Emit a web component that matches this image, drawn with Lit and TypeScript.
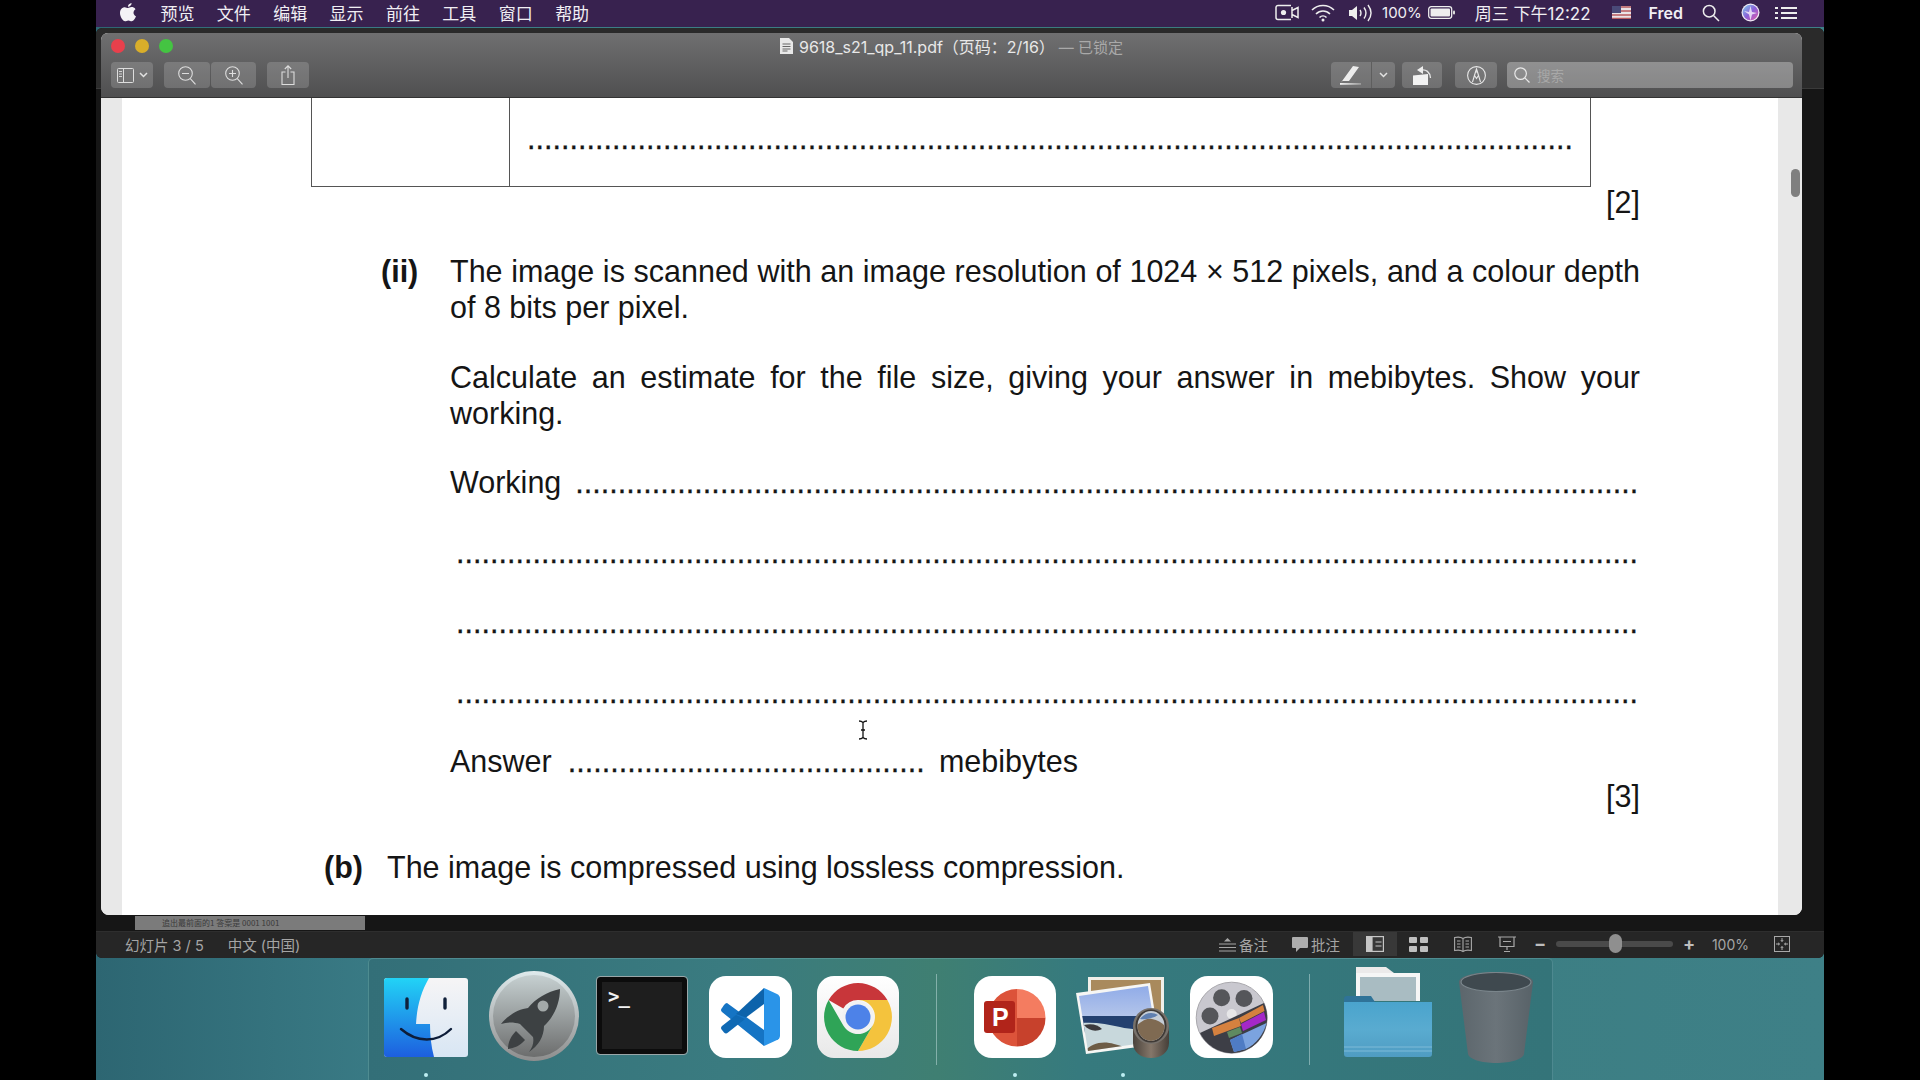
import { LitElement, html, css, svg } from 'lit'
import { customElement } from 'lit/decorators.js'

const dots = (n: number) => '.'.repeat(n)

// menu bar icons
const icRecord = html`<svg width="24" height="17" viewBox="0 0 24 17" fill="none" stroke="#eee" stroke-width="1.5"><path d="M16 1.5H3a2 2 0 0 0-2 2v10a2 2 0 0 0 2 2h13"/><path d="M17 3v11M17 6.5l6-3v10l-6-3"/><circle cx="8.5" cy="8.5" r="2.6" fill="#eee" stroke="none"/></svg>`
const icWifi = html`<svg width="24" height="18" viewBox="0 0 24 18" fill="none" stroke="#eee" stroke-width="1.6"><path d="M1 6c6-6 16-6 22 0M5 10c4-4 10-4 14 0M8.5 13.5c2-2 5-2 7 0"/><circle cx="12" cy="16" r="1.5" fill="#eee" stroke="none"/></svg>`
const icVolume = html`<svg width="24" height="18" viewBox="0 0 24 18" fill="none" stroke="#eee" stroke-width="1.4"><path d="M1 6h3l5-4v14l-5-4H1z" fill="#eee" stroke="none"/><path d="M12 6c1.300 2 1.300 4 0 6M16 3.500c2.500 3.500 2.500 7.500 0 11M20 1c3.800 5 3.800 11 0 16"/></svg>`
const icBattery = html`<svg width="27" height="13" viewBox="0 0 27 13"><rect x=".7" y=".7" width="23" height="11.600" rx="2.500" fill="none" stroke="#eee" stroke-width="1.300"/><rect x="2.500" y="2.500" width="19.500" height="8" rx="1" fill="#eee"/><rect x="25" y="4.500" width="2" height="4" rx="1" fill="#ddd"/></svg>`
const icFlag = html`<svg width="19" height="13" viewBox="0 0 19 13"><rect width="19" height="13" fill="#e9e3e6"/><path d="M0 1h19M0 5h19M0 9h19M0 12.500h19" stroke="#b85a5e" stroke-width="1.300"/><rect width="9" height="7" fill="#4a4a78"/></svg>`
const icSearch = html`<svg width="18" height="18" viewBox="0 0 18 18" fill="none" stroke="#eee" stroke-width="1.500"><circle cx="7.200" cy="7.200" r="5.800"/><path d="M11.500 11.500 17 17"/></svg>`
const icSiri = html`<svg width="19" height="19" viewBox="0 0 19 19"><defs><linearGradient id="siri" x1="0" y1="0" x2="1" y2="1"><stop offset="0" stop-color="#7fd0ee"/><stop offset=".5" stop-color="#8a5fd8"/><stop offset="1" stop-color="#e05aa8"/></linearGradient></defs><circle cx="9.500" cy="9.500" r="9" fill="#f0ecf5"/><circle cx="9.500" cy="9.500" r="7.800" fill="url(#siri)"/><path d="M3 8l5 1 1.500-6 1.500 6 5 1-5 1.500-1.500 6-1.500-6z" fill="#f2eafa" opacity=".85"/></svg>`
const icList = html`<svg width="22" height="14" viewBox="0 0 22 14" fill="none" stroke="#eee" stroke-width="2"><path d="M0 2h3M6 2h16M0 7h3M6 7h16M0 12h3M6 12h16"/></svg>`
const icApple = html`<svg width="16" height="19" viewBox="0 0 16 19" fill="#f4f2f6"><path d="M11.600 0c.1 1.900-1.700 3.900-3.700 3.800C7.700 2 9.700.2 11.600 0zM8 5c1 0 2-.9 3.600-.9 1.100 0 2.900.5 3.900 2.100-2.900 1.800-2.500 5.700.5 7-.8 2.100-2.500 5-4.300 5-1.300 0-1.700-.8-3.300-.8s-2.100.8-3.300.8C2.800 18.200 0 13.700 0 10c0-3.700 2.500-5.800 4.700-5.800C6.100 4.200 7.200 5 8 5z"/></svg>`

// toolbar icons
const tbSidebar = html`<svg width="17" height="15" viewBox="0 0 17 15" fill="none" stroke="#ddd" stroke-width="1"><rect x=".5" y=".5" width="16" height="14" rx="1"/><path d="M6.500 .5v14"/><path d="M2 3.500h3M2 6h3M2 8.500h3" stroke-width=".9"/></svg>`
const tbChevron = html`<svg width="9" height="6" viewBox="0 0 9 6" fill="none" stroke="#e2e2e2" stroke-width="1.500"><path d="M1 1l3.500 3.500L8 1"/></svg>`
const tbZoom = (plus: boolean) => html`<svg width="18" height="19" viewBox="0 0 18 19" fill="none" stroke="#ddd" stroke-width="1.100"><circle cx="7.500" cy="7.500" r="6.800"/><path d="M12.300 12.600 17.500 18.300M4 7.500h7"/>${plus ? svg`<path d="M7.500 4v7"/>` : ''}</svg>`
const tbShare = html`<svg width="14" height="20" viewBox="0 0 14 20" fill="none" stroke="#ddd" stroke-width="1.100"><path d="M4.500 7H1v12.500h12V7H9.500M7 13V1M3.800 4 7 .8 10.200 4"/></svg>`
const tbPen = html`<svg width="22" height="19" viewBox="0 0 22 19"><defs><linearGradient id="pn" x1="0" y1="0" x2="1" y2="0"><stop offset="0" stop-color="#f2f2f2"/><stop offset="1" stop-color="#9a9a9a"/></linearGradient></defs><path d="M13 0l6 1-10 14H2.500L1 16.500z" fill="#ececec"/><rect x="0" y="17" width="21" height="1.800" fill="url(#pn)"/></svg>`
const tbRotate = html`<svg width="19" height="19" viewBox="0 0 19 19"><path d="M0 9.500 15 8v11H0z" fill="#f2f2f2"/><path d="M8 4C13 3 17 6 17.500 12" fill="none" stroke="#e6e6e6" stroke-width="1.300"/><path d="M10 0v8L4 4z" fill="#eee"/></svg>`
const tbMarkup = html`<svg width="19" height="19" viewBox="0 0 19 19" fill="none" stroke="#e8e8e8" stroke-width="1.100"><circle cx="9.500" cy="9.500" r="8.900"/><path d="M5.500 16 8.500 6l1-3 1 3 3 10M8.500 6h2M7.500 9.500l2 3 2-3"/></svg>`
const tbFind = html`<svg width="16" height="16" viewBox="0 0 16 16" fill="none" stroke="#e8e8e8" stroke-width="1.200"><circle cx="6.600" cy="6.600" r="5.800"/><path d="M10.800 10.800 15.500 15.500"/></svg>`
const icDoc = html`<svg width="13" height="16" viewBox="0 0 13 16"><path d="M0 0h9l4 4v12H0z" fill="#e8e8e8"/><path d="M2.500 6h8M2.500 8.500h8M2.500 11h8M2.500 13h5" stroke="#666" stroke-width="1"/></svg>`

// status bar icons
const stNotes = html`<svg width="17" height="15" viewBox="0 0 17 15" fill="none" stroke="#a5a5a5" stroke-width="1.200"><path d="M0 7h17M0 10.500h17M0 14h17"/><path d="M5 4.500 8.500 1 12 4.500z" fill="#a5a5a5" stroke="none"/></svg>`
const stComment = html`<svg width="16" height="15" viewBox="0 0 16 15"><path d="M1 0h14a1 1 0 0 1 1 1v9a1 1 0 0 1-1 1H8l-4 4v-4H1a1 1 0 0 1-1-1V1a1 1 0 0 1 1-1z" fill="#adadad"/></svg>`
const stNormal = html`<svg width="18" height="16" viewBox="0 0 18 16"><rect x=".6" y=".6" width="16.800" height="14.800" fill="none" stroke="#c6c6c6" stroke-width="1.200"/><rect x=".6" y=".6" width="6" height="14.800" fill="#c6c6c6"/><path d="M9.500 6h6M9.500 10h6" stroke="#c6c6c6" stroke-width="1.200"/></svg>`
const stGrid = html`<svg width="19" height="15" viewBox="0 0 19 15" fill="#c0c0c0"><rect width="8" height="6" rx="1"/><rect x="11" width="8" height="6" rx="1"/><rect y="9" width="8" height="6" rx="1"/><rect x="11" y="9" width="8" height="6" rx="1"/></svg>`
const stRead = html`<svg width="18" height="17" viewBox="0 0 18 17" fill="none" stroke="#a8a8a8" stroke-width="1.100"><path d="M9 2.500C7 1 3 1 .6 1.500v13c2.400-.5 6.400-.5 8.400 1 2-1.500 6-1.500 8.400-1v-13C15 1 11 1 9 2.500zM9 2.500v13M3 5h3.500M3 8h3.500M3 11h3.500M11.500 5H15M11.500 8H15M11.500 11H15"/></svg>`
const stShow = html`<svg width="18" height="17" viewBox="0 0 18 17" fill="none" stroke="#a8a8a8" stroke-width="1.200"><path d="M0 1h18M2 1v9.500h14V1M9 10.500V14M6 15.500h6M5 5.500h8" /></svg>`
const stFit = html`<svg width="16" height="16" viewBox="0 0 16 16" fill="none" stroke="#a8a8a8" stroke-width="1"><rect x=".5" y=".5" width="15" height="15"/><path d="M8 2v3.500M6.800 4 8 5.500 9.200 4M8 14v-3.500M6.800 12 8 10.500 9.200 12M2 8h3.500M4 6.800 5.500 8 4 9.200M14 8h-3.500M12 6.800 10.500 8 12 9.200"/></svg>`

// dock icons
const finder = html`<svg width="84" height="79" viewBox="0 0 84 79"><defs>
  <linearGradient id="fl" x1="0" y1="0" x2="0" y2="1"><stop offset="0" stop-color="#22d3f6"/><stop offset="1" stop-color="#1d5fdf"/></linearGradient>
  <linearGradient id="fr" x1="0" y1="0" x2="0" y2="1"><stop offset="0" stop-color="#f6f5f6"/><stop offset="1" stop-color="#d8e6f4"/></linearGradient></defs>
  <rect width="84" height="79" rx="3" fill="url(#fr)"/>
  <path d="M3 0h42c-8 14-12 28-13 46h14c0 11 1 22 4 33H3a3 3 0 0 1-3-3V3a3 3 0 0 1 3-3z" fill="url(#fl)"/>
  <path d="M23 21v9M61 21v9" stroke="#10203a" stroke-width="3.400" stroke-linecap="round"/>
  <path d="M17 51c16 14 36 14 50 0" fill="none" stroke="#0d1c38" stroke-width="2.400" stroke-linecap="round"/></svg>`
const rocket = html`<svg width="90" height="90" viewBox="0 0 90 90"><defs>
  <linearGradient id="rr" x1="0" y1="0" x2="0" y2="1"><stop offset="0" stop-color="#dfeaec"/><stop offset="1" stop-color="#8d8d8d"/></linearGradient>
  <linearGradient id="ri" x1="0" y1="0" x2="0" y2="1"><stop offset="0" stop-color="#c6d0d1"/><stop offset="1" stop-color="#6c6d6d"/></linearGradient></defs>
  <circle cx="45" cy="45" r="45" fill="url(#rr)"/><circle cx="45" cy="45" r="41" fill="url(#ri)"/>
  <path d="M71 18C58 21 47 27 39 37 30 38 19 44 12 53c6-2 13-2 19 0l13 13c1 5 0 10-4 15 9-6 15-15 15-26 10-9 16-23 16-37z" fill="#3d4143"/>
  <path d="M27 60c-5 5-8 11-8 18 6-1 12-3 17-9-3-3-6-6-9-9z" fill="#3d4143"/>
  <circle cx="54" cy="35" r="5.500" fill="#a3a9a9"/></svg>`
const vscode = html`<svg width="83" height="82" viewBox="0 0 83 82"><rect width="83" height="82" rx="17" fill="#fff"/>
  <path d="M55 12l13 6q3 1.500 3 4.500v37q0 3-3 4.500l-13 6z" fill="#2a94e8"/>
  <path d="M18 27 55 54v16L13 36q-2-2 0-4l2-3q1.500-2 3-2z" fill="#1574c4"/>
  <path d="M55 12 27 38l10 3.500L55 28z" fill="#0d63ab"/>
  <path d="M27 39 13 50q-2 2 0 4l2 2.500q2 2 4 0L36 43z" fill="#0f69b4"/></svg>`
const chrome = html`<svg width="82" height="82" viewBox="0 0 82 82"><defs><linearGradient id="cw" x1="0" y1="0" x2="0" y2="1"><stop offset="0" stop-color="#fff"/><stop offset="1" stop-color="#e8e8e8"/></linearGradient></defs><rect width="82" height="82" rx="17" fill="url(#cw)"/>
  <path d="M11.600 24A34 34 0 0 1 70.400 24H41A17 17 0 0 0 26.300 32.500z" fill="#c8363a"/>
  <path d="M70.400 24A34 34 0 0 1 41 75L55.700 49.500A17 17 0 0 0 41 24z" fill="#f4c33d"/>
  <path d="M41 75A34 34 0 0 1 11.600 24L26.300 49.500A17 17 0 0 0 55.700 49.500z" fill="#2fa457"/>
  <circle cx="41" cy="41" r="16" fill="#f2f2f2"/><circle cx="41" cy="41" r="12.500" fill="#4d82e8"/></svg>`
const ppt = html`<svg width="82" height="82" viewBox="0 0 82 82"><rect width="82" height="82" rx="18" fill="#fff"/>
  <path d="M43 42V13a28.500 28.500 0 0 1 28.500 29z" fill="#f47c60"/>
  <path d="M43 42h28.500A28.500 28.500 0 0 1 43 70.500z" fill="#c7412c"/>
  <path d="M43 13v57.500A28.500 28.500 0 0 1 43 13z" fill="#dc533a"/>
  <rect x="10" y="25" width="31" height="32" rx="3" fill="#b1241a"/>
  <text x="18" y="50" class="ppt-p">P</text></svg>`
const preview = html`<svg width="94" height="83" viewBox="0 0 94 83"><defs>
  <linearGradient id="sk" x1="0" y1="0" x2="0" y2="1"><stop offset="0" stop-color="#8eaae8"/><stop offset="1" stop-color="#b5c6ea"/></linearGradient>
  <linearGradient id="pl" x1="0" y1="0" x2="1" y2="0"><stop offset="0" stop-color="#4a433c"/><stop offset=".5" stop-color="#85776a"/><stop offset="1" stop-color="#463f39"/></linearGradient>
  <clipPath id="ph"><polygon points="3,20 72,10 81,65 12,75"/></clipPath>
  <clipPath id="gl"><ellipse cx="75" cy="50" rx="13.500" ry="15"/></clipPath></defs>
  <rect x="12" y="1" width="76" height="62" fill="#f1efe9"/><rect x="15" y="4" width="70" height="54" fill="#a98a5d"/>
  <polygon points="0,17 74,7 84,68 10,78" fill="#f6f6f4"/>
  <g clip-path="url(#ph)">
    <rect x="0" y="8" width="85" height="34" fill="url(#sk)"/>
    <rect x="0" y="40" width="85" height="17" fill="#23406f"/>
    <path d="M0 48c14-3 30 0 44 3 12 3 24 2 40 6v20H0z" fill="#c8d8dc"/>
    <path d="M8 49c8-2 14 0 18 4-6 3-13 2-18-4z" fill="#3c3a3c"/>
    <path d="M8 76c6-8 18-12 30-8 8 2 14 4 20 9z" fill="#6d5c46"/>
  </g>
  <path d="M57 50h36v17c0 9-8 15-18 15s-18-6-18-15z" fill="url(#pl)"/>
  <ellipse cx="75" cy="50" rx="18" ry="18" fill="#77716b"/>
  <ellipse cx="75" cy="50" rx="15.500" ry="16.500" fill="#3f3a36"/>
  <ellipse cx="75" cy="50" rx="13.500" ry="15" fill="#c4ccd6"/>
  <g clip-path="url(#gl)"><path d="M60 50c6-5 10-8 16-7 6 1 10 4 14 8v16H60z" fill="#7f6a52"/><path d="M64 43c4-6 12-8 18-4-4 3-12 5-18 4z" fill="#5f7fb0"/></g></svg>`
const screenflow = html`<svg width="83" height="82" viewBox="0 0 83 82"><rect width="83" height="82" rx="18" fill="#fff"/>
  <circle cx="41.700" cy="41.700" r="35.500" fill="#c9c8cf"/><circle cx="41.700" cy="41.700" r="35.500" fill="none" stroke="#a9a8ad" stroke-width="1"/>
  <circle cx="31.600" cy="21.700" r="8.500" fill="#55565a"/><circle cx="54" cy="22.600" r="8.500" fill="#55565a"/><circle cx="20" cy="40" r="8.500" fill="#55565a"/><circle cx="41.700" cy="38" r="5" fill="#e6e6e8"/>
  <path d="M10 57 74 27A35.500 35.500 0 0 1 41.700 77.200C28 77.200 15 68 10 57z" fill="#3d3e46"/>
  <polygon points="22,52 49,42 51,50 24,60" fill="#d5813f"/>
  <polygon points="49,42 73,29 74.500,35 51,47" fill="#d5813f"/>
  <polygon points="51,48 74,36 76,44 53,55" fill="#a528c8"/>
  <polygon points="37,56 50,51 52,57 39,62" fill="#5f8a60"/>
  <path d="M40 64 76.500 47C74 58 66 68 56 73L44 76z" fill="#7ba3df"/>
  <path d="M40 64 52 58 56 73 44 76z" fill="#4f7cc4"/></svg>`
const folder = html`<svg width="88" height="90" viewBox="0 0 88 90"><defs>
  <linearGradient id="fo" x1="0" y1="0" x2="0" y2="1"><stop offset="0" stop-color="#4aa4cd"/><stop offset=".5" stop-color="#59abd0"/><stop offset="1" stop-color="#4f9cc2"/></linearGradient></defs>
  <path d="M12 0h30l8 6v6H12z" fill="#eceaea"/>
  <rect x="12" y="6" width="64" height="28" fill="#f6f6f6"/><rect x="16" y="10" width="56" height="24" fill="#a9bcc2"/>
  <path d="M0 32a3 3 0 0 1 3-3h24l4 6h54a3 3 0 0 1 3 3v6H0z" fill="#2f7398"/>
  <path d="M0 35h88v52a3 3 0 0 1-3 3H3a3 3 0 0 1-3-3z" fill="url(#fo)"/>
  <path d="M0 80h88M0 84h88" stroke="#7ebbd8" stroke-width="1"/></svg>`
const trash = html`<svg width="74" height="91" viewBox="0 0 74 91"><defs>
  <linearGradient id="tr" x1="0" y1="0" x2="1" y2="0"><stop offset="0" stop-color="#5c666c"/><stop offset=".5" stop-color="#6b747a"/><stop offset="1" stop-color="#586268"/></linearGradient></defs>
  <path d="M0 10C0 4 16 0 37 0s37 4 37 10l-9 72c-1 5-13 9-28 9S10 87 9 82z" fill="url(#tr)"/>
  <ellipse cx="37" cy="10" rx="35" ry="9.500" fill="#3f494f" stroke="#7a858b" stroke-width="1.200"/></svg>`

@customElement('app-root')
export class AppRoot extends LitElement {
  static styles = css`
    :host {
      display: block;
      width: 1920px;
      height: 1080px;
      background: #000;
      overflow: hidden;
      font-family: "Inter", "Noto Sans CJK SC", sans-serif;
    }
    .screen {
      width: 1728px;
      height: 1080px;
      margin-left: 96px;
      display: flex;
      flex-direction: column;
      background: linear-gradient(90deg, #2d6672 0%, #3c7f89 20%, #3a7c7e 55%, #3e8087 100%);
    }

    .menubar {
      height: 27px;
      flex: none;
      display: flex;
      align-items: center;
      padding: 0 27px 2px 24px;
      background: #38224f;
      color: #f1eff4;
      font-size: 17px;
      box-sizing: border-box;
    }
    .menu-left { display: flex; align-items: center; gap: 22.400px; }
    .menu-left svg { margin-right: 2px; }
    .menu-right { margin-left: auto; display: flex; align-items: center; color: #f1eff4; }
    .m1 { margin-left: 12px; display: flex; }
    .m2 { margin-left: 13px; display: flex; }
    .pct { margin-left: 10px; font-size: 15px; }
    .bat { margin-left: 6px; display: flex; }
    .clock { margin-left: 20px; font-size: 17px; }
    .flag { margin-left: 21px; display: flex; }
    .user { margin-left: 18px; font-weight: 600; font-size: 16px; }
    .sr { margin-left: 19px; display: flex; }
    .si { margin-left: 21px; display: flex; }
    .ls { margin-left: 15px; display: flex; }

    .desktop { flex: 1; position: relative; }
    .dock {
      flex: none;
      align-self: flex-start;
      margin-left: 272px;
      width: 1185px;
      height: 122px;
      box-sizing: border-box;
      padding-left: 3px;
      display: flex;
      border: 1px solid rgba(130, 185, 190, .35);
      border-bottom: none;
      border-radius: 5px 5px 0 0;
      background: linear-gradient(90deg, #336f78 0%, #3a7b80 30%, #3f7f72 48%, #367a7e 60%, #347479 100%);
    }
    .app {
      width: 108px;
      height: 121px;
      position: relative;
      display: flex;
      align-items: center;
      justify-content: center;
    }
    .app svg { margin-top: -5px; display: block; }
    .app.rk svg { margin-top: -8px; }
    .app.fd svg { margin-top: -15px; }
    .app.run::after {
      content: '';
      position: absolute;
      left: 52px;
      top: 114px;
      width: 4px;
      height: 4px;
      border-radius: 50%;
      background: #bdeef2;
    }
    .sep { width: 49px; display: flex; justify-content: center; padding-top: 15px; height: 91px; }
    .sep i { display: block; width: 1px; background: rgba(200, 225, 225, .5); }
    .ppt-p { font: 700 25px "Liberation Sans", sans-serif; fill: #fff; }
    .term {
      width: 90px;
      height: 77px;
      margin-top: -8px;
      box-sizing: border-box;
      padding: 4px 6px;
      background: #1e1e1e;
      border: 5px solid #0c0c0c;
      outline: 1px solid #9aa6a8;
      border-radius: 3px;
      color: #f2f2f2;
      font: 700 19px/20px "DejaVu Sans Mono", monospace;
      letter-spacing: -1px;
    }

    /* back window, powerpoint */
    .back {
      position: absolute;
      left: 0;
      top: 1px;
      width: 1728px;
      height: 930px;
      border-radius: 6px;
      background: #1a1a1a;
      display: flex;
      flex-direction: column;
      overflow: hidden;
    }
    .back-top { height: 60px; background: #2a2a2a; border-bottom: 1px solid #3a3a3a; flex: none; }
    .back-mid { flex: 1; background: #161616; position: relative; }
    .thumb {
      position: absolute;
      left: 39px;
      bottom: 1px;
      width: 230px;
      height: 14px;
      background: #7b7b7b;
      color: #3a3a3a;
      font: 8px/14px "Noto Sans CJK SC", sans-serif;
      padding-left: 27px;
      box-sizing: border-box;
    }
    .status {
      height: 27px;
      flex: none;
      display: flex;
      align-items: center;
      background: #262626;
      border-top: 1px solid #2e2e2e;
      color: #a5a5a5;
      font-size: 14.500px;
      padding: 0 0 2px 29px;
      box-sizing: border-box;
    }
    .status .lang { margin-left: 24px; }
    .status .tools { margin-left: auto; display: flex; align-items: center; height: 100%; padding-right: 34px; }
    .n1 { margin-left: 3px; }
    .n2 { margin-left: 24px; display: flex; }
    .view { width: 44px; height: 100%; display: flex; align-items: center; justify-content: center; margin-left: 13px; }
    .view.on { background: #383838; }
    .view + .view { margin-left: 0; }
    .pm { color: #bdbdbd; font-size: 18px; line-height: 18px; width: 12px; text-align: center; font-weight: 700; }
    .pm.first { margin-left: 5px; }
    .slider { width: 117px; height: 6px; border-radius: 3px; background: #4a4a4a; position: relative; margin: 0 10px; }
    .slider i { position: absolute; left: 53px; top: -7px; width: 13px; height: 19px; border-radius: 7px; background: #8f8f8f; }
    .zoom-val { margin-left: 17px; font-size: 14px; }
    .fit { margin-left: 25px; display: flex; }

    /* preview window */
    .win {
      position: absolute;
      left: 5px;
      top: 6px;
      width: 1701px;
      height: 882px;
      border-radius: 7px 7px 8px 8px;
      overflow: hidden;
      display: flex;
      flex-direction: column;
      background: #fff;
    }
    .toolbar {
      height: 65px;
      flex: none;
      box-sizing: border-box;
      border-bottom: 1px solid #333;
      padding: 0 9px 0 10px;
      background: linear-gradient(180deg, #6f6f70 0%, #4f4f50 100%);
      display: flex;
      flex-direction: column;
    }
    .lights { height: 25px; display: flex; align-items: center; gap: 10px; position: relative; flex: none; }
    .lights i { width: 14px; height: 14px; border-radius: 50%; }
    .red { background: #e8404c; }
    .yellow { background: #d9ae2a; }
    .green { background: #44c442; }
    .title {
      position: absolute;
      left: 669px;
      top: 1px;
      display: flex;
      align-items: center;
      gap: 6px;
      font-size: 16px;
      color: #e8e8e8;
      white-space: nowrap;
    }
    .title em { font-style: normal; font-size: 15px; color: #a9a9a9; margin-left: -2px; }
    .tools-row { display: flex; height: 26px; margin-top: 4px; }
    .btn {
      height: 26px;
      box-sizing: border-box;
      display: flex;
      align-items: center;
      justify-content: center;
      gap: 5px;
      border-radius: 4px;
      background: rgba(255, 255, 255, .17);
    }
    .b-side { width: 42px; }
    .b-zo { width: 46px; margin-left: 11px; }
    .b-zi { width: 45px; margin-left: 1px; }
    .b-sh { width: 42px; margin-left: 11px; }
    .b-pen { width: 64px; margin-left: auto; gap: 0; justify-content: flex-start; }
    .b-pen .l { width: 40px; height: 100%; display: flex; align-items: center; justify-content: center; border-right: 1px solid #5e5e5e; }
    .b-pen .r { flex: 1; display: flex; align-items: center; justify-content: center; }
    .b-rot { width: 40px; margin-left: 7px; }
    .b-mk { width: 42px; margin-left: 13px; }
    .search {
      width: 286px;
      margin-left: 10px;
      justify-content: flex-start;
      padding-left: 7px;
      background: rgba(255, 255, 255, .3);
      color: #a8a8a8;
      font-size: 13.500px;
      gap: 7px;
    }

    .page { flex: 1; display: flex; min-height: 0; position: relative; }
    .strip { flex: none; background: #e8e8e8; }
    .strip.l { width: 21px; }
    .strip.r { width: 24px; }
    .thumbbar { position: absolute; right: 2px; top: 71px; width: 9px; height: 28px; border-radius: 5px; background: #7f7f7f; }
    .doc {
      flex: 1;
      min-width: 0;
      overflow: hidden;
      box-sizing: border-box;
      padding: 0 138px 0 189px;
      font: 30.500px/36px "Liberation Sans", Arial, sans-serif;
      color: #151515;
      background: #fff;
    }
    .tbl {
      width: 1280px;
      height: 89px;
      box-sizing: border-box;
      display: flex;
      border: 1px solid #555;
      border-top: none;
    }
    .tbl .c1 { width: 197px; border-right: 1px solid #555; flex: none; }
    .tbl .c2 { flex: 1; padding: 22px 0 0 17px; min-width: 0; }
    .d { white-space: nowrap; letter-spacing: .03px; -webkit-text-stroke: .3px #151515; }
    .mark { text-align: right; }
    .m-2 { margin-top: -3px; }
    .q { display: grid; grid-template-columns: 69px minmax(0, 1fr); margin: 33px 0 0 70px; }
    .lbl { font-weight: 700; }
    .j { text-align: justify; text-align-last: justify; }
    .p2 { margin-top: 34px; }
    .row { display: flex; align-items: baseline; }
    .mt-w { margin-top: 33px; }
    .w-label { margin-right: 14px; }
    .dl { margin-left: 6px; }
    .dl1 { margin-top: 34px; }
    .dl2 { margin-top: 34px; }
    .ans { margin-top: 33px; }
    .ans .d { margin: 0 14px 0 16px; }
    .m-3 { margin-top: -1px; }
    .qb { display: grid; grid-template-columns: 63px minmax(0, 1fr); margin: 35px 0 0 13px; }
    .cursor { position: absolute; left: 757px; top: 622px; }
  `

  render() {
    return html`
      <div class="screen">
        <div class="menubar">
          <div class="menu-left">
            ${icApple}
            <span>预览</span><span>文件</span><span>编辑</span><span>显示</span><span>前往</span><span>工具</span><span>窗口</span><span>帮助</span>
          </div>
          <div class="menu-right">
            ${icRecord}
            <span class="m1">${icWifi}</span>
            <span class="m2">${icVolume}</span>
            <span class="pct">100%</span>
            <span class="bat">${icBattery}</span>
            <span class="clock">周三 下午12:22</span>
            <span class="flag">${icFlag}</span>
            <span class="user">Fred</span>
            <span class="sr">${icSearch}</span>
            <span class="si">${icSiri}</span>
            <span class="ls">${icList}</span>
          </div>
        </div>

        <div class="desktop">
          <div class="back">
            <div class="back-top"></div>
            <div class="back-mid"><div class="thumb">追出最前面的1 答案是 0001 1001</div></div>
            <div class="status">
              <span>幻灯片 3 / 5</span>
              <span class="lang">中文 (中国)</span>
              <div class="tools">
                ${stNotes}<span class="n1">备注</span>
                <span class="n2">${stComment}</span><span class="n1">批注</span>
                <span class="view on">${stNormal}</span>
                <span class="view">${stGrid}</span>
                <span class="view">${stRead}</span>
                <span class="view">${stShow}</span>
                <span class="pm first">−</span>
                <div class="slider"><i></i></div>
                <span class="pm">+</span>
                <span class="zoom-val">100%</span>
                <span class="fit">${stFit}</span>
              </div>
            </div>
          </div>

          <div class="win">
            <div class="toolbar">
              <div class="lights">
                <i class="red"></i><i class="yellow"></i><i class="green"></i>
                <div class="title">${icDoc}<span>9618_s21_qp_11.pdf（页码：2/16）</span><em>— 已锁定</em></div>
              </div>
              <div class="tools-row">
                <div class="btn b-side">${tbSidebar}${tbChevron}</div>
                <div class="btn b-zo">${tbZoom(false)}</div>
                <div class="btn b-zi">${tbZoom(true)}</div>
                <div class="btn b-sh">${tbShare}</div>
                <div class="btn b-pen"><span class="l">${tbPen}</span><span class="r">${tbChevron}</span></div>
                <div class="btn b-rot">${tbRotate}</div>
                <div class="btn b-mk">${tbMarkup}</div>
                <div class="btn search">${tbFind}<span>搜索</span></div>
              </div>
            </div>
            <div class="page">
              <div class="strip l"></div>
              <div class="doc">
                <div class="tbl"><div class="c1"></div><div class="c2"><div class="d">${dots(123)}</div></div></div>
                <div class="mark m-2">[2]</div>
                <div class="q">
                  <div class="lbl">(ii)</div>
                  <div>
                    <div class="j">The image is scanned with an image resolution of 1024 × 512 pixels, and a colour depth</div>
                    <div>of 8 bits per pixel.</div>
                    <div class="j p2">Calculate an estimate for the file size, giving your answer in mebibytes. Show your</div>
                    <div>working.</div>
                    <div class="row mt-w"><span class="w-label">Working</span><span class="d">${dots(125)}</span></div>
                    <div class="row dl dl1"><span class="d">${dots(139)}</span></div>
                    <div class="row dl dl2"><span class="d">${dots(139)}</span></div>
                    <div class="row dl dl2"><span class="d">${dots(139)}</span></div>
                    <div class="row ans"><span>Answer</span><span class="d">${dots(42)}</span><span>mebibytes</span></div>
                  </div>
                </div>
                <div class="mark m-3">[3]</div>
                <div class="qb"><div class="lbl">(b)</div><div>The image is compressed using lossless compression.</div></div>
              </div>
              <div class="strip r"></div>
              <div class="thumbbar"></div>
              <svg class="cursor" width="10" height="20" viewBox="0 0 10 20" fill="none" stroke="#111" stroke-width="1.300"><path d="M1 1c2 0 3 .5 4 1.500C6 1.500 7 1 9 1M5 2.500v15M1 19c2 0 3-.5 4-1.500 1 1 2 1.500 4 1.500M3 10h4"/></svg>
            </div>
          </div>
        </div>

        <div class="dock">
          <div class="app run">${finder}</div>
          <div class="app rk">${rocket}</div>
          <div class="app"><div class="term">&gt;_</div></div>
          <div class="app">${vscode}</div>
          <div class="app">${chrome}</div>
          <div class="sep"><i></i></div>
          <div class="app run">${ppt}</div>
          <div class="app run">${preview}</div>
          <div class="app">${screenflow}</div>
          <div class="sep"><i></i></div>
          <div class="app fd">${folder}</div>
          <div class="app">${trash}</div>
        </div>
      </div>
    `
  }
}
